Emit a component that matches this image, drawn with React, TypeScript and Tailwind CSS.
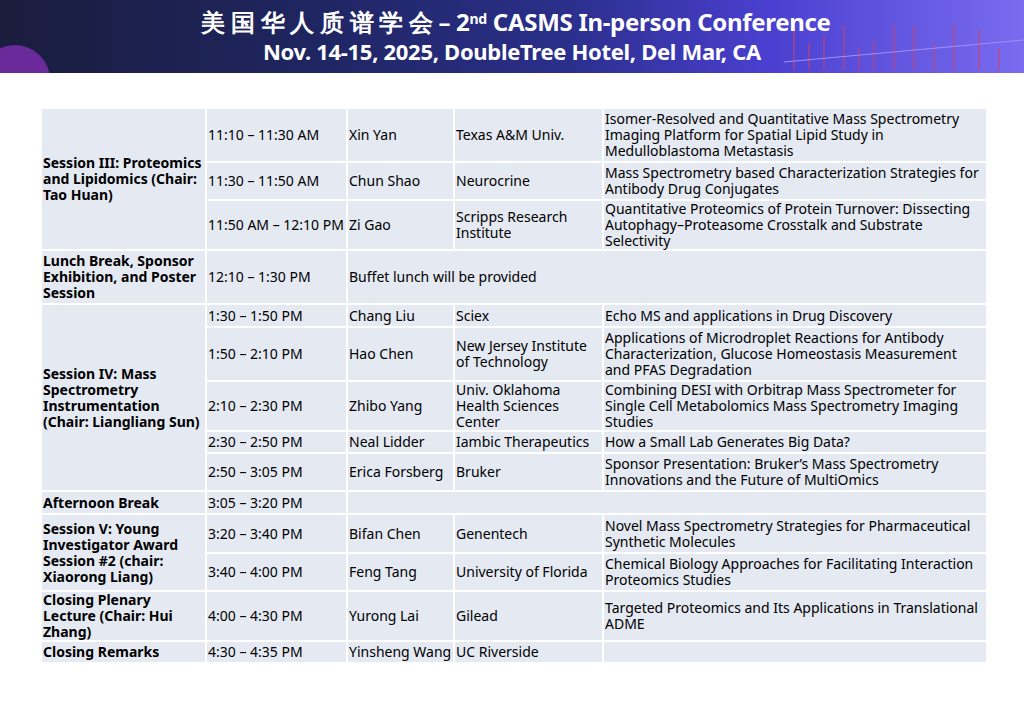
import React from "react";

type R = { h: string; t: string; n?: string; a?: string; tl?: string; span?: boolean };

const td = "border-2 border-white bg-[#e4e9f2] px-px align-middle leading-[16px]";

export default function App() {
  const rows: { s: string; rs: number; items: R[] }[] = [
    { s: "Session III: Proteomics and Lipidomics (Chair: Tao Huan)", rs: 3, items: [
      { h: "h-[54px]", t: "11:10 – 11:30 AM", n: "Xin Yan", a: "Texas A&M Univ.", tl: "Isomer-Resolved and Quantitative Mass Spectrometry Imaging Platform for Spatial Lipid Study in Medulloblastoma Metastasis" },
      { h: "h-[38px]", t: "11:30 – 11:50 AM", n: "Chun Shao", a: "Neurocrine", tl: "Mass Spectrometry based Characterization Strategies for Antibody Drug Conjugates" },
      { h: "h-[39px]", t: "11:50 AM – 12:10 PM", n: "Zi Gao", a: "Scripps Research Institute", tl: "Quantitative Proteomics of Protein Turnover: Dissecting Autophagy–Proteasome Crosstalk and Substrate Selectivity" },
    ]},
    { s: "Lunch Break, Sponsor Exhibition, and Poster Session", rs: 1, items: [
      { h: "h-[54px]", t: "12:10 – 1:30 PM", n: "Buffet lunch will be provided", span: true },
    ]},
    { s: "Session IV: Mass Spectrometry Instrumentation (Chair: Liangliang Sun)", rs: 5, items: [
      { h: "h-[23px]", t: "1:30 – 1:50 PM", n: "Chang Liu", a: "Sciex", tl: "Echo MS and applications in Drug Discovery" },
      { h: "h-[54px]", t: "1:50 – 2:10 PM", n: "Hao Chen", a: "New Jersey Institute of Technology", tl: "Applications of Microdroplet Reactions for Antibody Characterization, Glucose Homeostasis Measurement and PFAS Degradation" },
      { h: "h-[38px]", t: "2:10 – 2:30 PM", n: "Zhibo Yang", a: "Univ. Oklahoma Health Sciences Center", tl: "Combining DESI with Orbitrap Mass Spectrometer for Single Cell Metabolomics Mass Spectrometry Imaging Studies" },
      { h: "h-[22px]", t: "2:30 – 2:50 PM", n: "Neal Lidder", a: "Iambic Therapeutics", tl: "How a Small Lab Generates Big Data?" },
      { h: "h-[38px]", t: "2:50 – 3:05 PM", n: "Erica Forsberg", a: "Bruker", tl: "Sponsor Presentation: Bruker’s Mass Spectrometry Innovations and the Future of MultiOmics" },
    ]},
    { s: "Afternoon Break", rs: 1, items: [{ h: "h-[23px]", t: "3:05 – 3:20 PM", n: "", span: true }] },
    { s: "Session V: Young Investigator Award Session #2 (chair: Xiaorong Liang)", rs: 2, items: [
      { h: "h-[39px]", t: "3:20 – 3:40 PM", n: "Bifan Chen", a: "Genentech", tl: "Novel Mass Spectrometry Strategies for Pharmaceutical Synthetic Molecules" },
      { h: "h-[38px]", t: "3:40 – 4:00 PM", n: "Feng Tang", a: "University of Florida", tl: "Chemical Biology Approaches for Facilitating Interaction Proteomics Studies" },
    ]},
    { s: "Closing Plenary Lecture (Chair: Hui Zhang)", rs: 1, items: [
      { h: "h-[39px]", t: "4:00 – 4:30 PM", n: "Yurong Lai", a: "Gilead", tl: "Targeted Proteomics and Its Applications in Translational ADME" },
    ]},
    { s: "Closing Remarks", rs: 1, items: [
      { h: "h-[22px]", t: "4:30 – 4:35 PM", n: "Yinsheng Wang", a: "UC Riverside", tl: "" },
    ]},
  ];
  return (
    <div className="w-[1024px] h-[710px] bg-white overflow-hidden font-['Liberation_Sans',Arial,'Noto_Sans_CJK_SC',sans-serif]">
      <div className="relative h-[73px] bg-[linear-gradient(90deg,#1a1d3d_0%,#1f2560_30%,#2a2f8a_55%,#4a3fd0_75%,#7a6cf0_100%)] text-white font-bold flex flex-col items-center overflow-hidden">
        <div className="absolute left-[-20px] top-[45px] w-[70px] h-[70px] rounded-full bg-[#6a2a9a]" />
        <svg className="absolute right-0 top-0" width="240" height="73">
          {[10,25,40,60,75,90,110,130,150,170,195,215].map((x, i) => (
            <line key={i} x1={x} y1={70} x2={x} y2={70 - (i % 3 === 0 ? 45 : 20 + (i * 7) % 25)} stroke="#d04060" strokeWidth="1" />
          ))}
          <line x1="0" y1="62" x2="240" y2="40" stroke="#a090ff" strokeWidth="1" />
        </svg>
        <div className="relative mt-[8px] pl-[8px] text-[24px] leading-[28px] tracking-[-0.3px] font-['Liberation_Sans_Narrow','Noto_Sans_CJK_SC',sans-serif]">美 国 华 人 质 谱 学 会 – 2<sup className="text-[14px]">nd</sup> CASMS In-person Conference</div>
        <div className="relative mt-[2px] text-[22px] leading-[26px] tracking-[-0.3px] font-['Liberation_Sans_Narrow',sans-serif]">Nov. 14-15, 2025, DoubleTree Hotel, Del Mar, CA</div>
      </div>
      <table className="ml-[40px] mt-[34px] w-[946px] table-fixed border-collapse text-[14px] text-black">
        <colgroup>
          <col className="w-[165px]" /><col className="w-[141px]" /><col className="w-[107px]" /><col className="w-[149px]" /><col className="w-[384px]" />
        </colgroup>
        <tbody>
          {rows.flatMap((g, gi) =>
            g.items.map((r, ri) => (
              <tr key={gi + "-" + ri} className={r.h}>
                {ri === 0 && <td rowSpan={g.rs} className={td + " font-bold"}>{g.s}</td>}
                <td className={td}>{r.t}</td>
                {r.span ? (
                  <td colSpan={3} className={td}>{r.n}</td>
                ) : (
                  <>
                    <td className={td}>{r.n}</td>
                    <td className={td}>{r.a}</td>
                    <td className={td}>{r.tl}</td>
                  </>
                )}
              </tr>
            ))
          )}
        </tbody>
      </table>
    </div>
  );
}
